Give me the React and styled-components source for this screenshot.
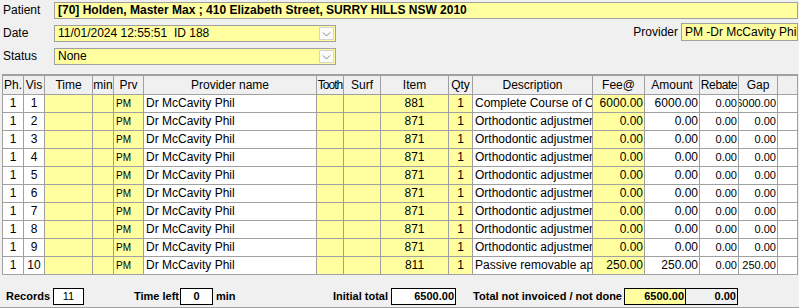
import React from "react";
import styled, { createGlobalStyle } from "styled-components";

const YELLOW = "#ffffa0";
const LINE = "#a0a0a0";

const GlobalStyle = createGlobalStyle`
  html, body { margin: 0; padding: 0; background: #f0f0f0; }
  body { font-family: "Liberation Sans", Arial, sans-serif; font-size: 12px; color: #000; }
`;

const Page = styled.div`
  width: 799px;
  height: 308px;
  display: flex;
  flex-direction: column;
  overflow: hidden;
`;

const HeaderPanel = styled.div`
  height: 74px;
  box-sizing: border-box;
  padding: 2px 1px 0 0;
  display: flex;
  flex-direction: column;
`;

const FormRow = styled.div`
  display: flex;
  align-items: flex-start;
  margin-top: ${(p) => p.$mt || 0}px;
`;

const Label = styled.div`
  width: 51px;
  padding-left: 3px;
  line-height: 17px;
  margin-top: ${(p) => p.$mt || 0}px;
  white-space: nowrap;
`;

const Field = styled.div`
  height: ${(p) => p.$h || 17}px;
  box-sizing: border-box;
  border: 1px solid ${LINE};
  background: ${YELLOW};
  padding-left: 3px;
  line-height: ${(p) => (p.$h || 17) - 2}px;
  white-space: pre;
  overflow: hidden;
  font-weight: ${(p) => (p.$bold ? "bold" : "normal")};
  ${(p) => (p.$w ? `width: ${p.$w}px;` : "flex: 1;")}
`;

const Combo = styled(Field)`
  display: flex;
  justify-content: space-between;
  align-items: center;
  margin-top: ${(p) => p.$mt || 0}px;
`;

const DropButton = styled.div`
  width: 15px;
  height: 13px;
  box-sizing: border-box;
  border: 1px solid #d4d4d4;
  background: #fbfbfb;
  margin-right: 1px;
  display: flex;
  align-items: center;
  justify-content: center;
`;

const ProviderGroup = styled.div`
  margin-left: auto;
  display: flex;
  align-items: center;
  gap: 3px;
`;

const Chevron = () => (
  <svg width="9" height="6" viewBox="0 0 9 6">
    <path d="M1 1.5 L4.5 5 L8 1.5" fill="none" stroke="#8a8a8a" strokeWidth="1" />
  </svg>
);

const COLS = [
  { key: "ph", label: "Ph.", w: "20px", align: "center", y: false },
  { key: "vis", label: "Vis", w: "20px", align: "center", y: false },
  { key: "time", label: "Time", w: "47px", align: "center", y: true },
  { key: "min", label: "min", w: "20px", align: "center", y: true },
  { key: "prv", label: "Prv", w: "29px", align: "left", y: true, size: 10 },
  { key: "name", label: "Provider name", w: "172px", align: "left", y: false },
  { key: "tooth", label: "Tooth", w: "26px", align: "center", y: true, tight: 1 },
  { key: "surf", label: "Surf", w: "36px", align: "center", y: true },
  { key: "item", label: "Item", w: "67px", align: "center", y: true },
  { key: "qty", label: "Qty", w: "23px", align: "center", y: true },
  { key: "desc", label: "Description", w: "119px", align: "left", y: false },
  { key: "fee", label: "Fee@", w: "51px", align: "right", y: true },
  { key: "amount", label: "Amount", w: "54px", align: "right", y: false },
  { key: "rebate", label: "Rebate", w: "38px", align: "right", y: false, size: 11, tight: 0.4 },
  { key: "gap", label: "Gap", w: "38px", align: "right", y: false, size: 11 },
  { key: "extra", label: "", w: "1fr", align: "left", y: false },
];

const Grid = styled.div`
  margin: 0 1px 0 2px;
  background: ${LINE};
  border-top: 2px solid ${LINE};
  padding: 0 1px 1px 1px;
  display: grid;
  grid-template-columns: ${COLS.map((c) => c.w).join(" ")};
  grid-template-rows: 18px;
  grid-auto-rows: 17px;
  gap: 1px;
`;

const HeadCell = styled.div`
  background: #f0f0f0;
  display: flex;
  align-items: center;
  justify-content: center;
  overflow: hidden;
  white-space: nowrap;
  line-height: 18px;
  letter-spacing: ${(p) => (p.$tight ? -p.$tight : 0)}px;
`;

const justify = { left: "flex-start", center: "center", right: "flex-end" };

const Cell = styled.div`
  background: ${(p) => (p.$yellow ? YELLOW : "#fff")};
  display: flex;
  align-items: center;
  justify-content: ${(p) => justify[p.$align]};
  padding: 0 ${(p) => (p.$align === "center" ? 0 : p.$align === "right" ? 1 : 2)}px;
  overflow: hidden;
  white-space: nowrap;
  font-size: ${(p) => p.$size || 12}px;
  line-height: 17px;
`;

const Footer = styled.div`
  flex: 1;
  display: flex;
  align-items: flex-start;
  padding: 13px 0 0 6px;
  border-bottom: 1px solid ${LINE};
  box-sizing: border-box;
`;

const FLabel = styled.div`
  width: ${(p) => p.$w}px;
  box-sizing: border-box;
  text-align: ${(p) => p.$align || "right"};
  padding-right: ${(p) => (p.$pr ?? 3)}px;
  padding-left: ${(p) => p.$pl || 0}px;
  font-weight: bold;
  font-size: 11px;
  line-height: 17px;
  white-space: nowrap;
`;

const FBox = styled.div`
  width: ${(p) => p.$w}px;
  height: 17px;
  box-sizing: border-box;
  border: 1px solid #000;
  background: ${(p) => p.$bg || "#fff"};
  font-size: 11px;
  font-weight: ${(p) => (p.$bold ? "bold" : "normal")};
  text-align: ${(p) => p.$align || "center"};
  line-height: 15px;
  padding: 0 1px;
  margin-left: ${(p) => p.$ml || 0}px;
`;

const ROWS = Array.from({ length: 10 }, (_, i) => {
  const n = i + 1;
  let item = "871", desc = "Orthodontic adjustment", fee = "0.00", amount = "0.00", gap = "0.00";
  if (n === 1) { item = "881"; desc = "Complete Course of Orthodontic Treatment"; fee = "6000.00"; amount = "6000.00"; gap = "6000.00"; }
  if (n === 10) { item = "811"; desc = "Passive removable appliance"; fee = "250.00"; amount = "250.00"; gap = "250.00"; }
  return { ph: "1", vis: String(n), time: "", min: "", prv: "PM", name: "Dr McCavity Phil", tooth: "", surf: "", item, qty: "1", desc, fee, amount, rebate: "0.00", gap, extra: "" };
});

export default function App() {
  return (
    <Page>
      <GlobalStyle />
      <HeaderPanel>
        <FormRow>
          <Label>Patient</Label>
          <Field $bold>[70] Holden, Master Max ; 410 Elizabeth Street, SURRY HILLS NSW 2010</Field>
        </FormRow>
        <FormRow $mt={4}>
          <Label $mt={2}>Date</Label>
          <Combo $w={282} $mt={2}>
            <span>11/01/2024 12:55:51  ID 188</span>
            <DropButton><Chevron /></DropButton>
          </Combo>
          <ProviderGroup>
            <span>Provider</span>
            <Field $w={117} $h={18}>PM -Dr McCavity Phil</Field>
          </ProviderGroup>
        </FormRow>
        <FormRow $mt={6}>
          <Label>Status</Label>
          <Combo $w={282}>
            <span>None</span>
            <DropButton><Chevron /></DropButton>
          </Combo>
        </FormRow>
      </HeaderPanel>

      <Grid>
        {COLS.map((c) => (
          <HeadCell key={c.key} $tight={c.tight}>{c.label}</HeadCell>
        ))}
        {ROWS.map((r, i) =>
          COLS.map((c) => (
            <Cell key={i + c.key} $yellow={c.y} $align={c.align} $size={c.size}>
              {r[c.key]}
            </Cell>
          ))
        )}
      </Grid>

      <Footer>
        <FLabel $w={47}>Records</FLabel>
        <FBox $w={31}>11</FBox>
        <FLabel $w={96} $pr={1}>Time left</FLabel>
        <FBox $w={33} $bold>0</FBox>
        <FLabel $w={40} $align="left" $pr={0} $pl={3}>min</FLabel>
        <FLabel $w={138}>Initial total</FLabel>
        <FBox $w={65} $bold $align="right">6500.00</FBox>
        <FLabel $w={168} $pr={2}>Total not invoiced / not done</FLabel>
        <FBox $w={62} $bold $align="right" $bg={YELLOW}>6500.00</FBox>
        <FBox $w={53} $bold $align="right" $bg="#f0f0f0" $ml={-1}>0.00</FBox>
      </Footer>
    </Page>
  );
}
